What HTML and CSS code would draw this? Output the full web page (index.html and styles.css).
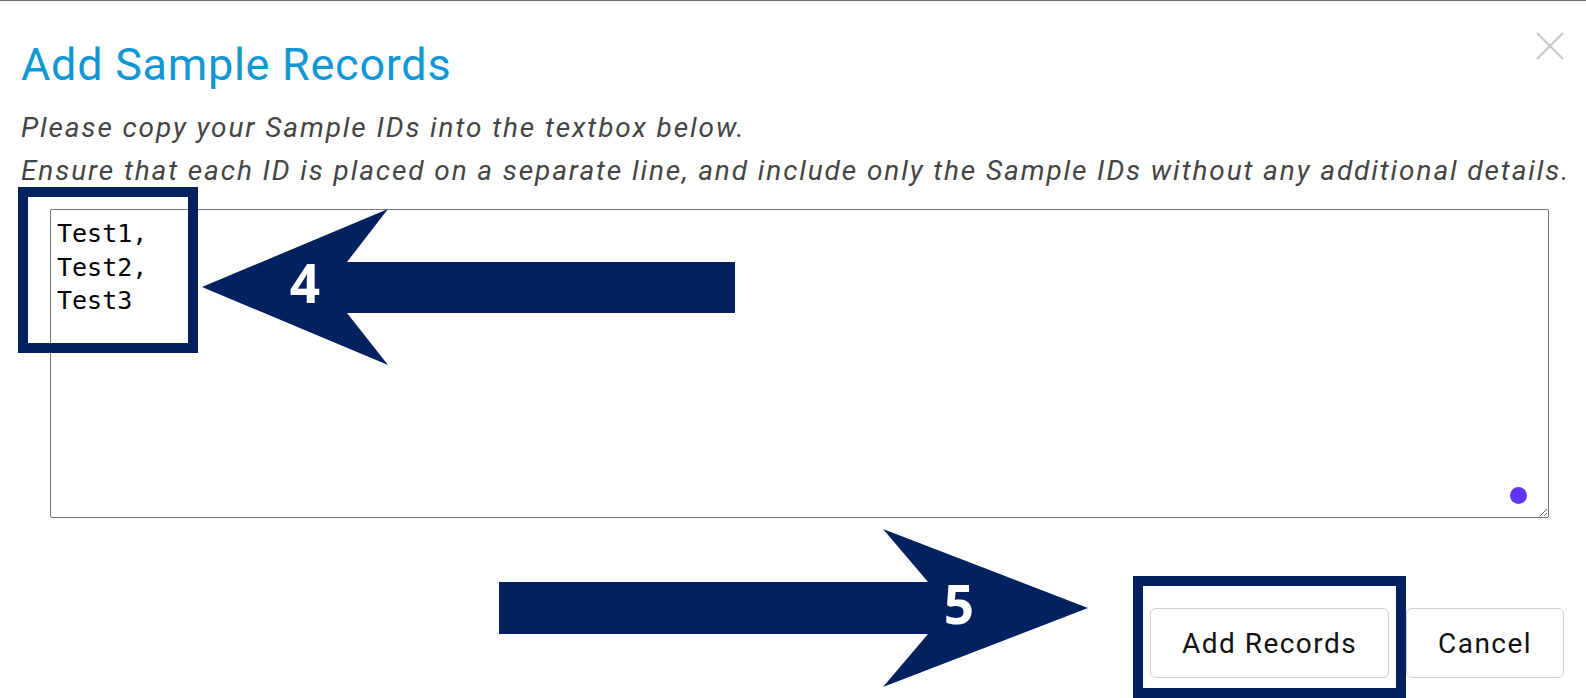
FILE: index.html
```html
<!DOCTYPE html>
<html lang="en">
<head>
<meta charset="utf-8">
<title>Add Sample Records</title>
<link rel="stylesheet" href="styles.css">
</head>
<body>
<div class="topline"></div>
<div class="modal">
  <h1 class="title">Add Sample Records</h1>
  <button class="close" aria-label="Close">
    <svg width="28" height="28" viewBox="0 0 28 28"><path d="M1 1 L27 27 M27 1 L1 27" stroke="#c9c9c9" stroke-width="2.2" fill="none"/></svg>
  </button>
  <p class="desc">Please copy your Sample IDs into the textbox below.<br>Ensure that each ID is placed on a separate line, and include only the Sample IDs without any additional details.</p>
  <div class="field">
    <textarea class="ids">Test1,
Test2,
Test3</textarea>
    <span class="dot"></span>
  </div>
  <div class="actions">
    <button class="btn">Add Records</button>
    <button class="btn">Cancel</button>
  </div>
</div>
<svg class="overlay" width="1586" height="698" viewBox="0 0 1586 698">
  <rect x="23" y="192" width="170" height="156" fill="none" stroke="#03205f" stroke-width="10"/>
  <polygon points="202,287 388,209 347,262 735,262 735,313 347,313 388,365" fill="#03205f"/>
  <text x="305" y="303" class="num" text-anchor="middle">4</text>
  <rect x="1138" y="581" width="263" height="112" fill="none" stroke="#03205f" stroke-width="10"/>
  <polygon points="499,582 928,582 883,529 1088,608 883,687 928,634 499,634" fill="#03205f"/>
  <text x="959" y="624" class="num" text-anchor="middle">5</text>
</svg>
</body>
</html>
```
FILE: styles.css
```css
html, body {
  margin: 0;
  padding: 0;
  background: #fff;
}
body {
  width: 1586px;
  height: 698px;
  overflow: hidden;
  position: relative;
  font-family: Roboto, "Liberation Sans", sans-serif;
}
.topline {
  height: 1px;
  background: #707070;
}
.modal {
  position: relative;
  padding: 37px 22px 0 21px;
}
.title {
  margin: 0;
  font-size: 45px;
  line-height: 54px;
  font-weight: 400;
  letter-spacing: 0.72px;
  color: #1197d5;
}
.close {
  position: absolute;
  top: 31px;
  right: 22px;
  width: 28px;
  height: 28px;
  padding: 0;
  border: 0;
  background: none;
}
.close svg {
  display: block;
}
.desc {
  margin: 14px 0 0;
  font-size: 28px;
  line-height: 43px;
  font-style: italic;
  letter-spacing: 1.9px;
  white-space: nowrap;
  color: #454545;
}
.field {
  position: relative;
  margin: 17px 0 0 29px;
  width: 1499px;
  height: 309px;
}
.ids {
  display: block;
  box-sizing: border-box;
  width: 100%;
  height: 100%;
  margin: 0;
  padding: 7px 6px;
  border: 1px solid #767676;
  border-radius: 2px;
  font-family: "DejaVu Sans Mono", "Liberation Mono", monospace;
  font-size: 25px;
  line-height: 33.5px;
  color: #000;
  background: #fff;
  resize: both;
  outline: none;
}
.dot {
  position: absolute;
  right: 22px;
  bottom: 14px;
  width: 17px;
  height: 17px;
  border-radius: 50%;
  background: #6133f7;
}
.actions {
  display: flex;
  justify-content: flex-end;
  gap: 17px;
  margin-top: 90px;
}
.btn {
  height: 70px;
  padding: 0 31px;
  border: 1px solid #cfcfcf;
  border-radius: 6px;
  background: #fff;
  font-family: Roboto, "Liberation Sans", sans-serif;
  font-size: 28px;
  letter-spacing: 1.45px;
  color: #111;
}
.overlay {
  position: absolute;
  top: 0;
  left: 0;
  pointer-events: none;
}
.num {
  font-family: "Open Sans", "Liberation Sans", sans-serif;
  font-weight: 700;
  font-size: 53px;
  fill: #fff;
}
```
